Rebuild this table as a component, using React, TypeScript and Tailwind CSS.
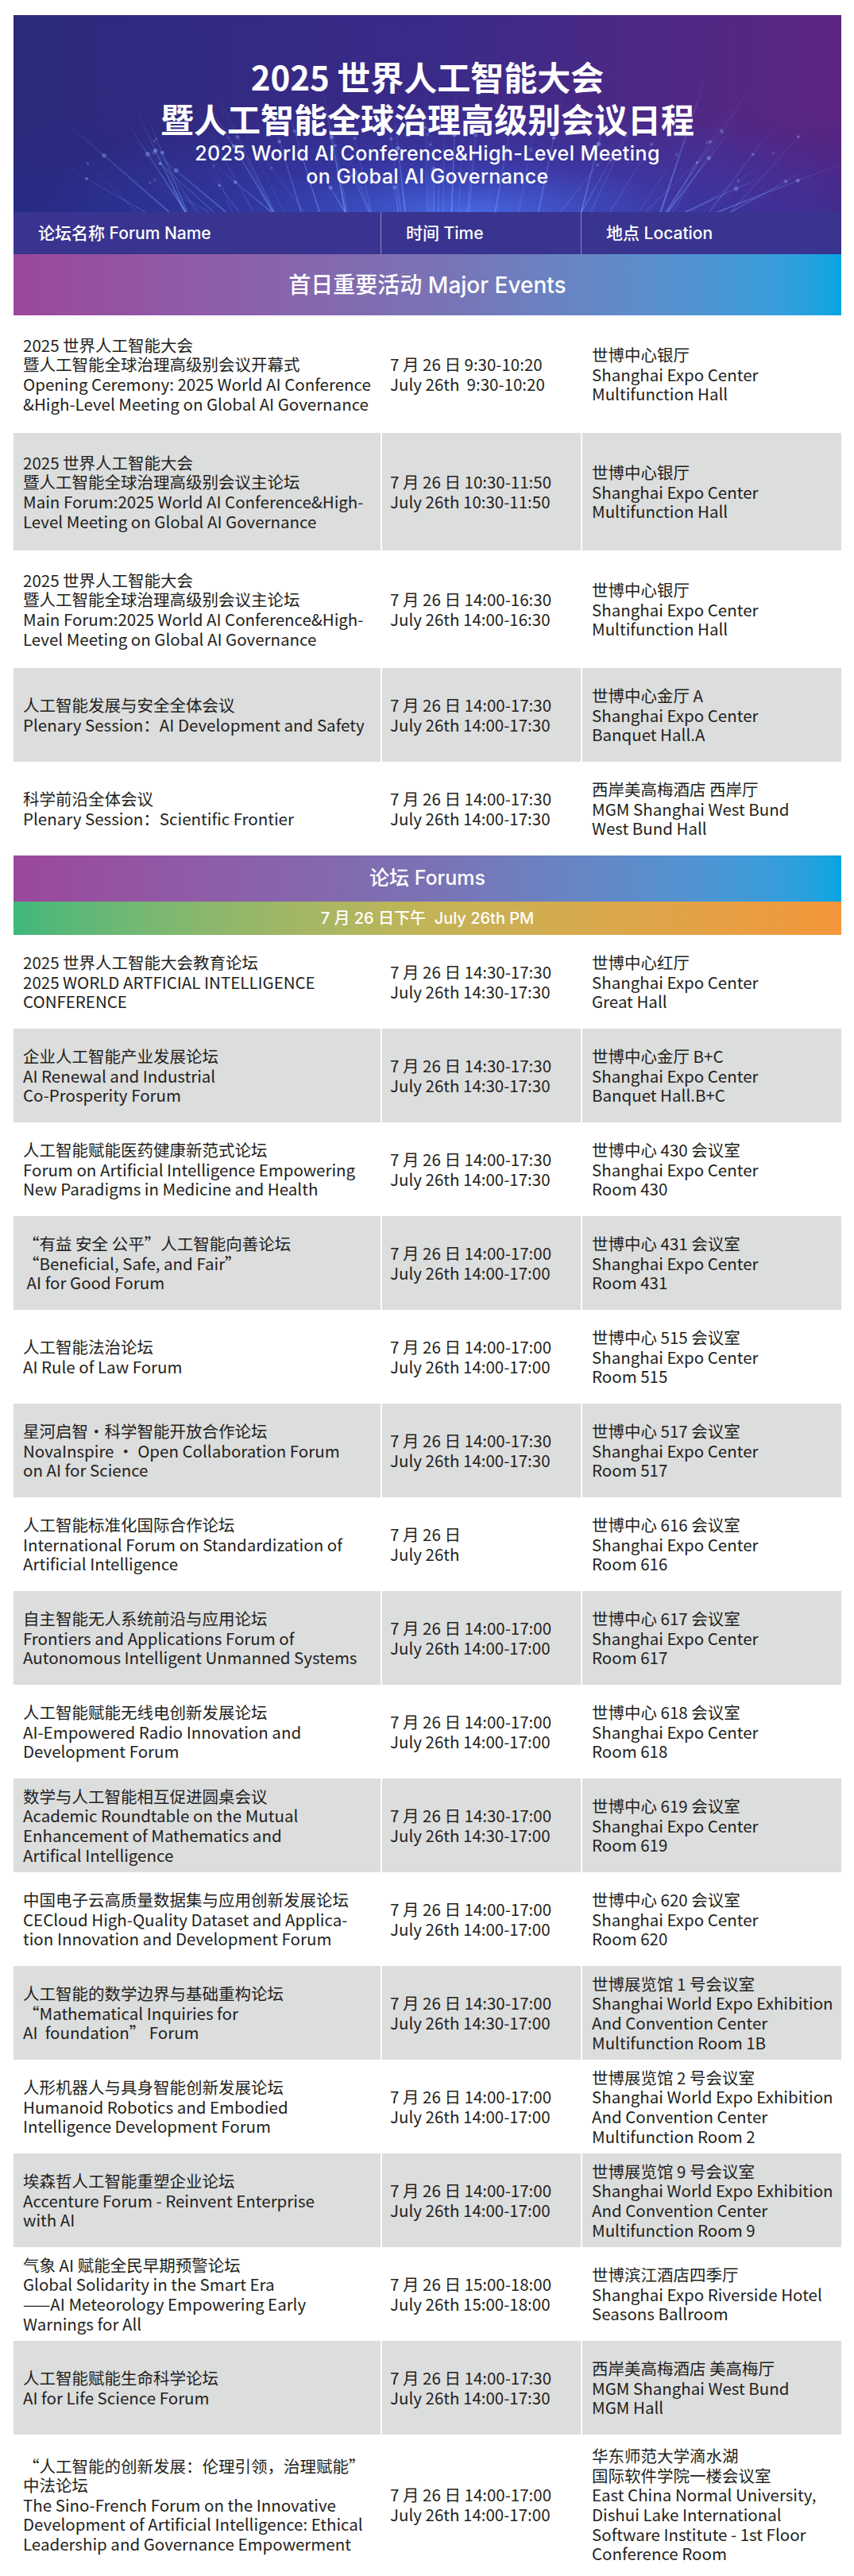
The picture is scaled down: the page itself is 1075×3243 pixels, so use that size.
import React from 'react'

type Row = { name: string[]; time: string[]; loc: string[]; h?: string }

const expo = (room: string) => ['世博中心 ' + room + ' 会议室', 'Shanghai Expo Center', 'Room ' + room]
const t = (range: string) => ['7 月 26 日 ' + range, 'July 26th ' + range]

const majorRows: Row[] = [
  {
    name: [
      '2025 世界人工智能大会',
      '暨人工智能全球治理高级别会议开幕式',
      'Opening Ceremony: 2025 World AI Conference',
      '&High-Level Meeting on Global AI Governance',
    ],
    time: ['7 月 26 日 9:30-10:20', 'July 26th  9:30-10:20'],
    loc: ['世博中心银厅', 'Shanghai Expo Center', 'Multifunction Hall'],
    h: 'h-[148px]',
  },
  {
    name: [
      '2025 世界人工智能大会',
      '暨人工智能全球治理高级别会议主论坛',
      'Main Forum:2025 World AI Conference&High-',
      'Level Meeting on Global AI Governance',
    ],
    time: t('10:30-11:50'),
    loc: ['世博中心银厅', 'Shanghai Expo Center', 'Multifunction Hall'],
    h: 'h-[148px]',
  },
  {
    name: [
      '2025 世界人工智能大会',
      '暨人工智能全球治理高级别会议主论坛',
      'Main Forum:2025 World AI Conference&High-',
      'Level Meeting on Global AI Governance',
    ],
    time: t('14:00-16:30'),
    loc: ['世博中心银厅', 'Shanghai Expo Center', 'Multifunction Hall'],
    h: 'h-[148px]',
  },
  {
    name: ['人工智能发展与安全全体会议', 'Plenary Session：AI Development and Safety'],
    time: t('14:00-17:30'),
    loc: ['世博中心金厅 A', 'Shanghai Expo Center', 'Banquet Hall.A'],
  },
  {
    name: ['科学前沿全体会议', 'Plenary Session：Scientific Frontier'],
    time: t('14:00-17:30'),
    loc: ['西岸美高梅酒店 西岸厅', 'MGM Shanghai West Bund', 'West Bund Hall'],
  },
]

const expoHall = (n: string) => [
  '世博展览馆 ' + n + ' 号会议室',
  'Shanghai World Expo Exhibition',
  'And Convention Center',
  'Multifunction Room ' + (n === '1' ? '1B' : n),
]

const forumRows: Row[] = [
  {
    name: ['2025 世界人工智能大会教育论坛', '2025 WORLD ARTFICIAL INTELLIGENCE', 'CONFERENCE'],
    time: t('14:30-17:30'),
    loc: ['世博中心红厅', 'Shanghai Expo Center', 'Great Hall'],
  },
  {
    name: ['企业人工智能产业发展论坛', 'AI Renewal and Industrial', 'Co-Prosperity Forum'],
    time: t('14:30-17:30'),
    loc: ['世博中心金厅 B+C', 'Shanghai Expo Center', 'Banquet Hall.B+C'],
  },
  {
    name: ['人工智能赋能医药健康新范式论坛', 'Forum on Artificial Intelligence Empowering', 'New Paradigms in Medicine and Health'],
    time: t('14:00-17:30'),
    loc: expo('430'),
  },
  {
    name: ['“有益 安全 公平”人工智能向善论坛', '“Beneficial, Safe, and Fair”', ' AI for Good Forum'],
    time: t('14:00-17:00'),
    loc: expo('431'),
  },
  { name: ['人工智能法治论坛', 'AI Rule of Law Forum'], time: t('14:00-17:00'), loc: expo('515') },
  {
    name: ['星河启智·科学智能开放合作论坛', 'NovaInspire · Open Collaboration Forum', 'on AI for Science'],
    time: t('14:00-17:30'),
    loc: expo('517'),
  },
  {
    name: ['人工智能标准化国际合作论坛', 'International Forum on Standardization of', 'Artificial Intelligence'],
    time: ['7 月 26 日', 'July 26th'],
    loc: expo('616'),
  },
  {
    name: ['自主智能无人系统前沿与应用论坛', 'Frontiers and Applications Forum of', 'Autonomous Intelligent Unmanned Systems'],
    time: t('14:00-17:00'),
    loc: expo('617'),
  },
  {
    name: ['人工智能赋能无线电创新发展论坛', 'AI-Empowered Radio Innovation and', 'Development Forum'],
    time: t('14:00-17:00'),
    loc: expo('618'),
  },
  {
    name: ['数学与人工智能相互促进圆桌会议', 'Academic Roundtable on the Mutual', 'Enhancement of Mathematics and', 'Artifical Intelligence'],
    time: t('14:30-17:00'),
    loc: expo('619'),
  },
  {
    name: ['中国电子云高质量数据集与应用创新发展论坛', 'CECloud High-Quality Dataset and Applica-', 'tion Innovation and Development Forum'],
    time: t('14:00-17:00'),
    loc: expo('620'),
  },
  {
    name: ['人工智能的数学边界与基础重构论坛', '“Mathematical Inquiries for', 'AI  foundation” Forum'],
    time: t('14:30-17:00'),
    loc: expoHall('1'),
  },
  {
    name: ['人形机器人与具身智能创新发展论坛', 'Humanoid Robotics and Embodied', 'Intelligence Development Forum'],
    time: t('14:00-17:00'),
    loc: expoHall('2'),
  },
  {
    name: ['埃森哲人工智能重塑企业论坛', 'Accenture Forum - Reinvent Enterprise', 'with AI'],
    time: t('14:00-17:00'),
    loc: expoHall('9'),
  },
  {
    name: ['气象 AI 赋能全民早期预警论坛', 'Global Solidarity in the Smart Era', '——AI Meteorology Empowering Early', 'Warnings for All'],
    time: t('15:00-18:00'),
    loc: ['世博滨江酒店四季厅', 'Shanghai Expo Riverside Hotel', 'Seasons Ballroom'],
  },
  {
    name: ['人工智能赋能生命科学论坛', 'AI for Life Science Forum'],
    time: t('14:00-17:30'),
    loc: ['西岸美高梅酒店 美高梅厅', 'MGM Shanghai West Bund', 'MGM Hall'],
  },
  {
    name: [
      '“人工智能的创新发展：伦理引领，治理赋能”',
      '中法论坛',
      'The Sino-French Forum on the Innovative',
      'Development of Artificial Intelligence: Ethical',
      'Leadership and Governance Empowerment',
    ],
    time: t('14:00-17:00'),
    loc: [
      '华东师范大学滴水湖',
      '国际软件学院一楼会议室',
      'East China Normal University,',
      'Dishui Lake International',
      'Software Institute - 1st Floor',
      'Conference Room',
    ],
    h: 'h-[176px]',
  },
]

function Lines({ lines }: { lines: string[] }) {
  return (
    <>
      {lines.map((l, i) => (
        <div key={i} className="whitespace-pre">
          {l}
        </div>
      ))}
    </>
  )
}

function ScheduleRow({ row, gray }: { row: Row; gray: boolean }) {
  return (
    <div
      className={`grid grid-cols-[462px_252px_328px] ${row.h ?? 'h-[118px]'} ${gray ? 'bg-[#dcdddd]' : 'bg-white'} text-[20.5px] leading-[24.6px] text-[#231f20]`}
    >
      <div className="flex flex-col justify-center pl-[12px]">
        <Lines lines={row.name} />
      </div>
      <div className="flex flex-col justify-center border-l-2 border-white pl-[10px]">
        <Lines lines={row.time} />
      </div>
      <div className="flex flex-col justify-center border-l-2 border-white pl-[12px]">
        <Lines lines={row.loc} />
      </div>
    </div>
  )
}

// fiber-optic streaks behind the title
function Fibers() {
  let seed = 7
  const rnd = () => {
    seed = (seed * 9301 + 49297) % 233280
    return seed / 233280
  }
  const strands = Array.from({ length: 70 }, () => {
    const x0 = 150 + rnd() * 760
    const spread = (x0 - 530) * (0.15 + rnd() * 0.35)
    const top = 70 + rnd() * 130
    return { x0, x1: x0 + spread, top, o: 0.15 + rnd() * 0.45, w: 0.6 + rnd() * 1.4 }
  })
  return (
    <svg className="absolute inset-0 h-full w-full" viewBox="0 0 1042 248" preserveAspectRatio="none">
      <defs>
        <radialGradient id="glow" cx="0.55" cy="1" r="0.55">
          <stop offset="0" stopColor="#4f7dff" stopOpacity="0.75" />
          <stop offset="0.5" stopColor="#3c4fd6" stopOpacity="0.3" />
          <stop offset="1" stopColor="#3c4fd6" stopOpacity="0" />
        </radialGradient>
        <linearGradient id="strand" x1="0" y1="1" x2="0" y2="0">
          <stop offset="0" stopColor="#7fb0ff" stopOpacity="0.9" />
          <stop offset="1" stopColor="#7fb0ff" stopOpacity="0" />
        </linearGradient>
      </defs>
      <rect x="0" y="0" width="1042" height="248" fill="url(#glow)" />
      {strands.map((s, i) => (
        <g key={i}>
          <line x1={s.x0} y1={248} x2={s.x1} y2={s.top} stroke="url(#strand)" strokeWidth={s.w} opacity={s.o} />
          <circle cx={s.x0 + (s.x1 - s.x0) * 0.6} cy={248 - (248 - s.top) * 0.6} r={1 + s.w} fill="#9cc4ff" opacity={s.o * 0.8} />
        </g>
      ))}
    </svg>
  )
}

export default function App() {
  return (
    <div className="w-[1075px] bg-white pl-[17px] pt-[19px] pb-[2px] font-['Noto_Sans_CJK_SC',sans-serif]">
      <div className="w-[1042px]">
        {/* banner */}
        <div className="relative h-[248px] overflow-hidden bg-gradient-to-r from-[#2b2a7c] via-[#3a2a88] to-[#5c2583]">
          <div className="absolute inset-0 bg-gradient-to-b from-transparent via-transparent to-[#1d2b8a]/40" />
          <Fibers />
          <div className="relative flex flex-col items-center pt-[50px] text-white">
            <div className="whitespace-pre-line text-center text-[42px] font-bold leading-[53px]">
              {'2025 世界人工智能大会\n暨人工智能全球治理高级别会议日程'}
            </div>
            <div className="mt-[4px] whitespace-pre-line text-center font-['Inter','Noto_Sans_CJK_SC',sans-serif] text-[25px] font-medium leading-[29px] tracking-[0.4px]">
              {'2025 World AI Conference&High-Level Meeting\non Global AI Governance'}
            </div>
          </div>
        </div>

        {/* column header */}
        <div className="grid h-[53px] grid-cols-[462px_252px_328px] bg-[#39348f] font-['Inter','Noto_Sans_CJK_SC',sans-serif] text-[21px] font-medium text-white">
          <div className="flex items-center pl-[31px]">论坛名称 Forum Name</div>
          <div className="flex items-center border-l border-[#8e8ac4] pl-[31px]">时间 Time</div>
          <div className="flex items-center border-l border-[#8e8ac4] pl-[31px]">地点 Location</div>
        </div>

        <div className="flex h-[77px] items-center justify-center bg-gradient-to-r from-[#9b479c] via-[#7a72b4] to-[#00a5e2] font-['Inter','Noto_Sans_CJK_SC',sans-serif] text-[28px] font-medium text-white">
          首日重要活动 Major Events
        </div>
        {majorRows.map((r, i) => (
          <ScheduleRow key={i} row={r} gray={i % 2 === 1} />
        ))}

        <div className="flex h-[58px] items-center justify-center bg-gradient-to-r from-[#9b479c] via-[#7a72b4] to-[#00a5e2] font-['Inter','Noto_Sans_CJK_SC',sans-serif] text-[25px] font-medium text-white">
          论坛 Forums
        </div>
        <div className="flex h-[42px] items-center justify-center whitespace-pre bg-gradient-to-r from-[#3db87c] via-[#c3b457] to-[#f3963a] font-['Inter','Noto_Sans_CJK_SC',sans-serif] text-[20px] font-medium text-white">
          7 月 26 日下午  July 26th PM
        </div>
        {forumRows.map((r, i) => (
          <ScheduleRow key={i} row={r} gray={i % 2 === 1} />
        ))}
      </div>
    </div>
  )
}
